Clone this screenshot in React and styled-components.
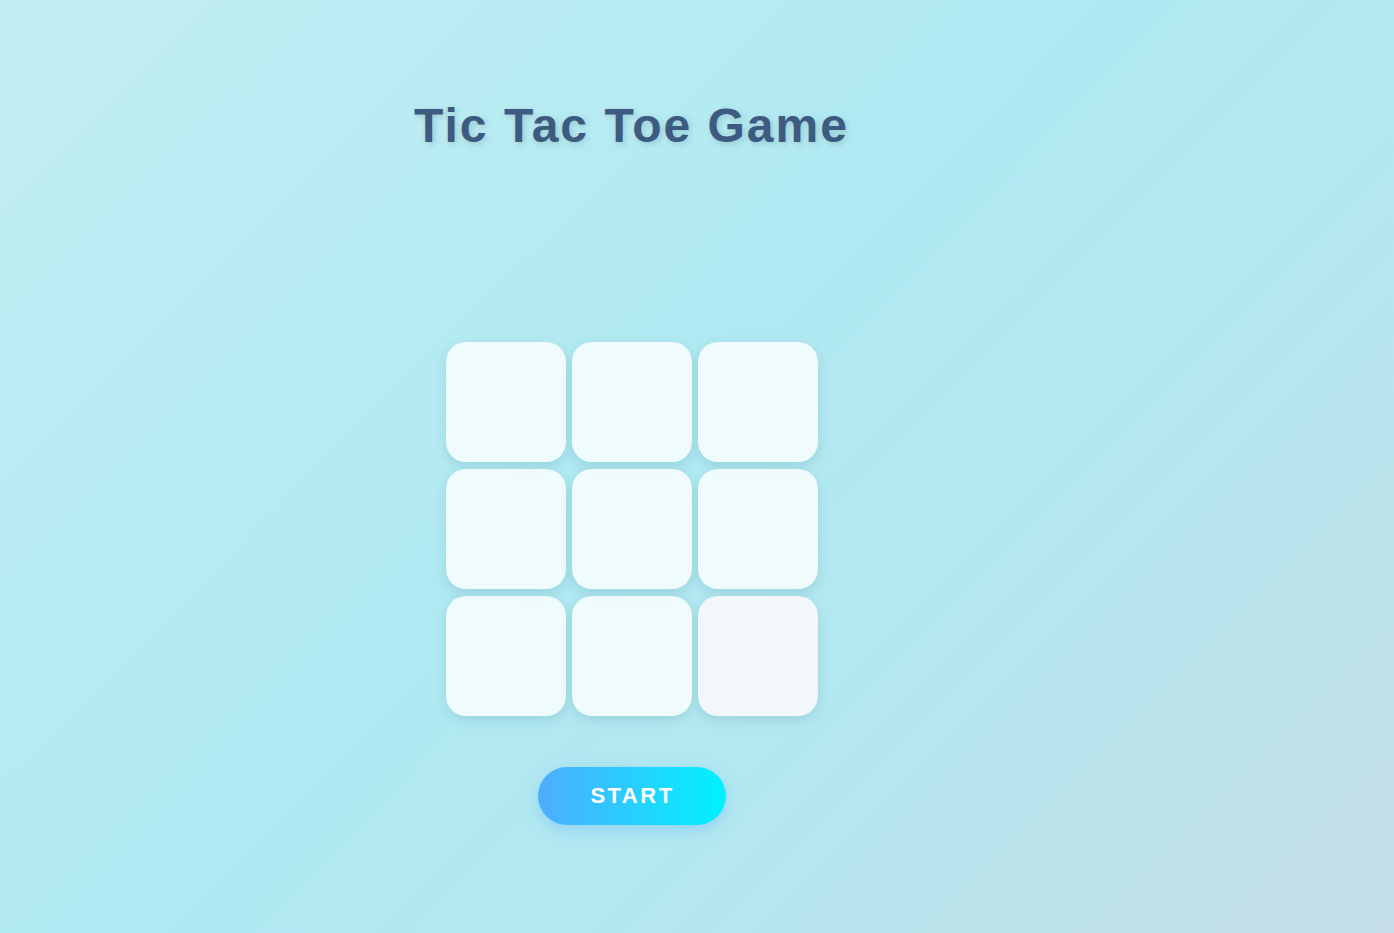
import React, { useState } from 'react';
import styled, { createGlobalStyle } from 'styled-components';

const GlobalStyle = createGlobalStyle`
  html, body {
    margin: 0;
    padding: 0;
    min-height: 100%;
  }
  body {
    font-family: "Liberation Sans", Arial, sans-serif;
    background: linear-gradient(135deg, #c2eef3 0%, #b0e9f2 45%, #b3e8f0 65%, #c5dee8 100%);
    background-attachment: fixed;
    min-height: 933px;
  }
`;

const Page = styled.main`
  width: 1263px;
  min-height: 933px;
  display: flex;
  flex-direction: column;
  align-items: center;
`;

const Title = styled.h1`
  margin: 96px 0 0;
  font-size: 48px;
  line-height: 59px;
  font-weight: 700;
  letter-spacing: 2px;
  color: #3d5a80;
  text-shadow: 2px 2px 6px rgba(0, 0, 0, 0.15);
`;

const Board = styled.div`
  margin-top: 187px;
  display: grid;
  grid-template-columns: repeat(3, 120px);
  grid-auto-rows: 120px;
  gap: 7px 6px;
`;

const Cell = styled.button`
  border: none;
  padding: 0;
  border-radius: 20px;
  background: ${props => props.$tint ? '#f1f7fb' : 'rgba(255, 255, 255, 0.8)'};
  box-shadow: 0 4px 12px rgba(0, 90, 110, 0.14);
  cursor: pointer;
  font-family: inherit;
  font-size: 56px;
  font-weight: 700;
  color: #3d5a80;
`;

const StartButton = styled.button`
  margin-top: 51px;
  width: 188px;
  height: 58px;
  border: none;
  border-radius: 29px;
  background: linear-gradient(to right, #4facfe 0%, #00f2fe 100%);
  box-shadow: 0 5px 15px rgba(79, 172, 254, 0.35);
  color: #ffffff;
  font-family: "Liberation Sans", Arial, sans-serif;
  font-size: 22px;
  font-weight: 700;
  letter-spacing: 2.5px;
  padding: 0 0 0 2px;
  cursor: pointer;
`;

const App = () => {
  const [cells] = useState(Array(9).fill(''));

  return (
    <>
      <GlobalStyle />
      <Page>
        <Title>Tic Tac Toe Game</Title>
        <Board>
          {cells.map((value, i) => (
            <Cell key={i} $tint={i === 8}>{value}</Cell>
          ))}
        </Board>
        <StartButton>START</StartButton>
      </Page>
    </>
  );
};

export default App;
